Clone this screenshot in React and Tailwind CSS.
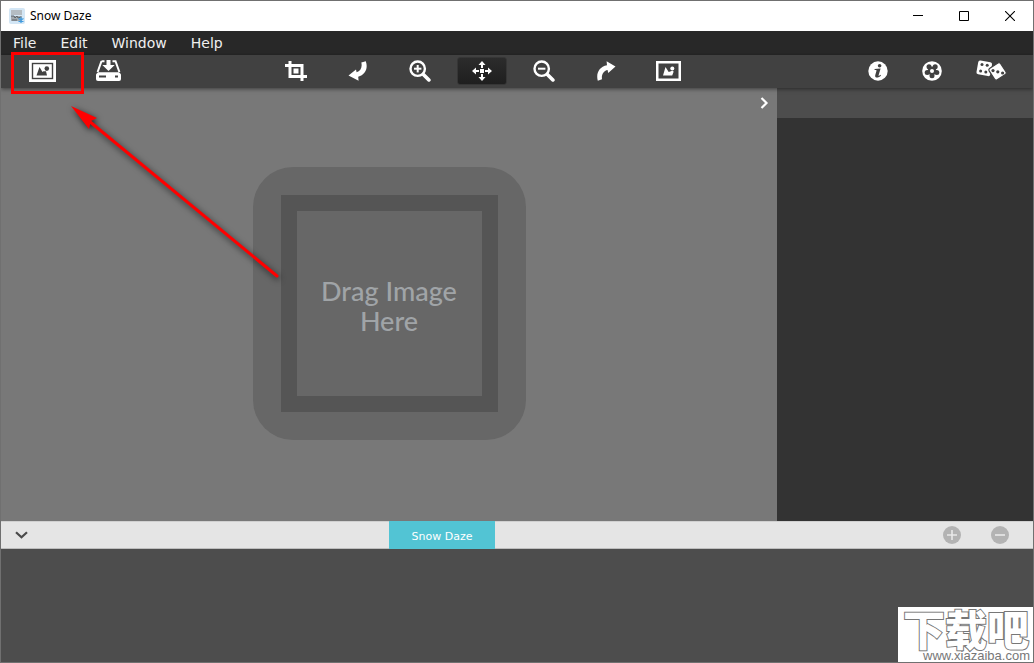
import { useState } from 'react';

const menus = ['File', 'Edit', 'Window', 'Help'];

const AppIcon = () => (
  <svg width="16" height="16" viewBox="0 0 16 16" aria-hidden="true">
    <rect x="0" y="0" width="16" height="16" rx="2" fill="#d3e6f5" />
    <rect x="2" y="2" width="11" height="5" fill="#b4bcc2" />
    <path d="M2 8h11v5H2z" fill="#a2a9ae" />
    <path d="M2 8h3l1 2 2-2 1 2 3-1M3 12h5" stroke="#5c6368" strokeWidth="1" fill="none" />
    <path d="M12 9v6M9.500 10.500l5 3M14.500 10.500l-5 3" stroke="#3f9be0" strokeWidth="1.2" />
  </svg>
);

const OpenIcon = () => (
  <svg width="27" height="22" viewBox="0 0 27 22" aria-hidden="true">
    <rect width="27" height="22" fill="#fff" />
    <rect x="3.5" y="3.5" width="20" height="15" fill="#fff" stroke="#414141" strokeWidth="1.4" />
    <path d="M7.5 15.5L10.5 7l3 5 1-.8 2.500 0 1 4.300z" fill="#414141" />
    <circle cx="17.8" cy="8.6" r="2.3" fill="#414141" />
  </svg>
);

const SaveIcon = () => (
  <svg width="25" height="21" viewBox="0 0 25 21" aria-hidden="true">
    <path d="M5.5 1.2H8.500M16.500 1.2h3L23.4 12M5.5 1.2L1.6 12" stroke="#fff" strokeWidth="2" fill="none" />
    <path d="M10.5 0h4v5h4.2l-6.2 6-6.2-6h4.2z" fill="#fff" />
    <path d="M2 12.200h21l2 2V19a2 2 0 0 1-2 2H2a2 2 0 0 1-2-2v-4.800z" fill="#fff" />
    <path d="M3 15.500h7v2H3zM19 15.500h3v2h-3z" fill="#414141" />
  </svg>
);

const CropIcon = () => (
  <svg width="22" height="20" viewBox="0 0 22 20" aria-hidden="true">
    <path d="M0 4.5h17V20M5 0v15.5h17" stroke="#fff" strokeWidth="3" fill="none" />
    <rect x="8.5" y="7.5" width="5" height="5" fill="#fff" />
  </svg>
);

const RotateLeftIcon = () => (
  <svg width="20" height="20" viewBox="0 0 20 20" aria-hidden="true">
    <path d="M13.300 1.600L17.800 0.3C20.4 7.5 17 14.2 10.2 15.7L10.6 19.8 0.5 14.6 8 8.600 8.6 11.200C12.6 10 14.5 6.2 13.300 1.600z" fill="#fff" />
  </svg>
);

const RotateRightIcon = () => (
  <svg width="20" height="20" viewBox="0 0 20 20" aria-hidden="true">
    <path d="M6 18.3L1.8 19.8C-.2 12.6 3 5.7 11 4.3L10.6.3 19.5 5.5 12.2 12 11.6 9C7.4 9.8 5.3 13.8 6 18.3z" fill="#fff" />
  </svg>
);

const ZoomIcon = ({ plus }) => (
  <svg width="22" height="22" viewBox="0 0 22 22" aria-hidden="true">
    <circle cx="8.7" cy="8.7" r="7.2" stroke="#fff" strokeWidth="2.4" fill="none" />
    <path d="M5 8.7h7.4" stroke="#fff" strokeWidth="2" />
    {plus && <path d="M8.7 5v7.4" stroke="#fff" strokeWidth="2" />}
    <path d="M14.4 14.4l5.5 5.5" stroke="#fff" strokeWidth="3.6" strokeLinecap="round" />
  </svg>
);

const MoveIcon = () => (
  <svg width="20" height="20" viewBox="0 0 20 20" fill="#fff" aria-hidden="true">
    <rect x="8" y="8" width="4" height="4" />
    <path d="M10 0l3.5 4H11v3H9V4H6.5zM10 20l3.5-4H11v-3H9v3H6.500zM0 10l4-3.5V9h3v2H4v2.5zM20 10l-4-3.5V9h-3v2h3v2.5z" />
  </svg>
);

const FitIcon = () => (
  <svg width="25" height="20" viewBox="0 0 25 20" aria-hidden="true">
    <rect x="1.25" y="1.25" width="22.5" height="17.5" fill="none" stroke="#fff" strokeWidth="2.5" />
    <path d="M7 14.5L9.5 6l3.2 5 1.5-.4 2-.8 1.500.700-1.500 4z" fill="#fff" />
    <circle cx="16.3" cy="7.6" r="2" fill="#fff" />
  </svg>
);

const InfoIcon = () => (
  <svg width="20" height="20" viewBox="0 0 20 20" aria-hidden="true">
    <circle cx="10" cy="10" r="9.7" fill="#fff" />
    <circle cx="11.6" cy="4.8" r="1.8" fill="#414141" />
    <path d="M6.600 8l6-.6-2 6.900c-.2.9.4.9 1.9-.5l.5.6c-2.3 2.8-6.500 3-5.8-.1l1.3-4.5c.2-.7-.2-.9-1.900-.8z" fill="#414141" />
  </svg>
);

const PresetIcon = () => (
  <svg width="20" height="20" viewBox="0 0 20 20" aria-hidden="true">
    <circle cx="10" cy="10" r="9.8" fill="#fff" />
    <g fill="#414141">
      <circle cx="7" cy="5.8" r="2.5" />
      <circle cx="13.2" cy="5.8" r="2.5" />
      <circle cx="14.8" cy="11.4" r="2.5" />
      <circle cx="10" cy="14.8" r="2.5" />
      <circle cx="5.200" cy="11.4" r="2.5" />
      <circle cx="10" cy="10" r="4.4" />
    </g>
    <circle cx="10" cy="10" r="2" fill="#fff" />
  </svg>
);

const DiceIcon = () => (
  <svg width="31" height="21" viewBox="0 0 31 21" aria-hidden="true">
    <rect x="1.3" y="1.3" width="14" height="14" rx="2" fill="#fff" transform="rotate(10 8 8)" />
    <g fill="#414141">
      <circle cx="6" cy="4.4" r="1.5" />
      <circle cx="11.2" cy="5.3" r="1.5" />
      <circle cx="4.6" cy="11" r="1.5" />
      <circle cx="9.8" cy="12" r="1.5" />
    </g>
    <rect x="14.8" y="4.6" width="13.6" height="13.6" rx="2" fill="#fff" stroke="#414141" strokeWidth="1.2" transform="rotate(57 21.6 11.4)" />
    <g fill="#414141">
      <circle cx="17" cy="10.6" r="1.6" />
      <circle cx="21.8" cy="11.8" r="1.6" />
      <circle cx="26.6" cy="13" r="1.6" />
    </g>
  </svg>
);

const viewTools = [
  { id: 'crop', label: 'Crop', icon: <CropIcon /> },
  { id: 'left', label: 'Rotate left', icon: <RotateLeftIcon /> },
  { id: 'zoomIn', label: 'Zoom in', icon: <ZoomIcon plus /> },
  { id: 'move', label: 'Move', icon: <MoveIcon /> },
  { id: 'zoomOut', label: 'Zoom out', icon: <ZoomIcon /> },
  { id: 'right', label: 'Rotate right', icon: <RotateRightIcon /> },
  { id: 'fit', label: 'Fit image', icon: <FitIcon /> },
];

const TitleBar = () => (
  <header className="flex h-[30px] shrink-0 items-center bg-white text-black">
    <div className="flex flex-1 items-center gap-[5px] pl-2">
      <AppIcon />
      <h1 className="font-['Noto_Sans',sans-serif] text-[12px] leading-4">Snow Daze</h1>
    </div>
    <button aria-label="Minimize" className="flex h-full w-[46px] items-center justify-center">
      <svg width="10" height="10" viewBox="0 0 10 10">
        <path d="M0 4.5h10" stroke="#000" />
      </svg>
    </button>
    <button aria-label="Maximize" className="flex h-full w-[46px] items-center justify-center">
      <svg width="10" height="10" viewBox="0 0 10 10">
        <path d="M.5.5h9v9h-9z" fill="none" stroke="#000" />
      </svg>
    </button>
    <button aria-label="Close" className="flex h-full w-[46px] items-center justify-center">
      <svg width="10" height="10" viewBox="0 0 10 10">
        <path d="M0 0l10 10M10 0L0 10" stroke="#000" strokeWidth="1.1" />
      </svg>
    </button>
  </header>
);

const MenuBar = () => (
  <nav className="flex h-6 shrink-0 items-center gap-6 bg-[#282828] pl-3 text-[14px] leading-5 text-[#f0f0f0]">
    {menus.map((name) => (
      <button key={name}>{name}</button>
    ))}
  </nav>
);

const Toolbar = ({ tool, onTool }) => (
  <div className="z-10 flex h-[33px] shrink-0 items-center justify-between bg-[#414141] px-2 pb-0.5 shadow-[0_1px_4px_rgba(0,0,0,0.5)]">
    <div className="flex">
      <button aria-label="Open image" className="flex w-[66px] justify-center"><OpenIcon /></button>
      <button aria-label="Save image" className="flex w-[66px] justify-center"><SaveIcon /></button>
    </div>
    <div className="flex gap-3">
      {viewTools.map((t) => (
        <button
          key={t.id}
          aria-label={t.label}
          aria-pressed={tool === t.id}
          onClick={() => onTool(t.id)}
          className={`flex h-7 w-[50px] items-center justify-center rounded-[3px] ${
            tool === t.id
              ? 'border border-[#363636] bg-linear-to-b from-[#2c2c2c] to-[#1f1f1f]'
              : ''
          }`}
        >
          {t.icon}
        </button>
      ))}
    </div>
    <div className="flex items-center pl-7">
      <button aria-label="Info" className="flex w-[54px] justify-center"><InfoIcon /></button>
      <button aria-label="Presets" className="flex w-[54px] justify-center"><PresetIcon /></button>
      <button aria-label="Random" className="flex w-16 justify-center"><DiceIcon /></button>
      <span className="w-0.5" />
    </div>
  </div>
);

const Canvas = () => (
  <main className="relative flex flex-1 items-center justify-center bg-[#787878] pb-[3px]">
    <div className="rounded-[40px] bg-[#676767] p-7">
      <div className="flex size-[217px] items-center justify-center border-16 border-[#555] pt-1.5">
        <p className="text-center font-[Lato,sans-serif] text-[27px] leading-[30px] font-medium text-[#a0a4a7]">
          Drag Image
          <br />
          Here
        </p>
      </div>
    </div>
    <button aria-label="Hide panel" className="absolute top-[9px] right-2">
      <svg width="9" height="12" viewBox="0 0 9 12">
        <path d="M1.5 1l5 5-5 5" fill="none" stroke="#fff" strokeWidth="2.2" />
      </svg>
    </button>
  </main>
);

const PresetBar = () => (
  <div className="flex h-7 shrink-0 items-stretch justify-between border-y border-t-[#d0d0d0] border-b-[#bdbdbd] bg-[#e5e5e5]">
    <button aria-label="Collapse presets" className="flex w-10 items-center justify-center">
      <svg width="13" height="8" viewBox="0 0 13 8">
        <path d="M1 1.2l5.5 5 5.5-5" fill="none" stroke="#4a4a4a" strokeWidth="2.2" />
      </svg>
    </button>
    <button className="-my-px bg-[#52c4d4] px-[23px] pt-1 text-[11px] text-white">Snow Daze</button>
    <div className="flex pr-[9px] pl-[85px]">
      <button aria-label="Add preset" className="flex w-12 items-center justify-center">
        <svg width="18" height="18" viewBox="0 0 18 18">
          <circle cx="9" cy="9" r="9" fill="#b3b3b3" />
          <path d="M4 9h10M9 4v10" stroke="#e9e9e9" strokeWidth="1.6" />
        </svg>
      </button>
      <button aria-label="Remove preset" className="flex w-12 items-center justify-center">
        <svg width="18" height="18" viewBox="0 0 18 18">
          <circle cx="9" cy="9" r="9" fill="#b3b3b3" />
          <path d="M4 9h10" stroke="#e9e9e9" strokeWidth="1.6" />
        </svg>
      </button>
    </div>
  </div>
);

// red marker around the open button, with an arrow pointing at it
const Callout = () => (
  <div className="pointer-events-none absolute inset-0 z-20">
    <div className="absolute top-[51px] left-[10px] h-[42px] w-[73px] border-3 border-[#f00]" />
    <svg className="absolute top-[95px] left-[60px]" width="240" height="200" viewBox="0 0 240 200">
      <g className="drop-shadow-[1px_2px_3px_rgba(0,0,0,0.7)]">
        <path d="M28 25L216 180" stroke="#f00" strokeWidth="3" strokeLinecap="round" />
        <path d="M10 10L36 22 30 25 28 33z" fill="#f00" />
      </g>
    </svg>
  </div>
);

const Watermark = () => (
  <div className="pointer-events-none absolute -right-px -bottom-px z-20 flex h-14 w-[136px] flex-col items-center bg-white">
    <p className="font-['Noto_Sans_CJK_SC',sans-serif] text-[42px] leading-[42px] font-black whitespace-nowrap text-white [paint-order:stroke] [-webkit-text-stroke:2px_#777]">下载吧</p>
    <p className="self-end pr-1 font-['Liberation_Sans',sans-serif] text-[13px] leading-[14px] text-[#777]">www.xiazaiba.com</p>
  </div>
);

const App = () => {
  const [tool, setTool] = useState('move');

  return (
    <div className="relative flex h-screen flex-col overflow-hidden border border-[#707070] bg-[#4d4d4d] font-['DejaVu_Sans',Verdana,sans-serif]">
      <TitleBar />
      <MenuBar />
      <Toolbar tool={tool} onTool={setTool} />
      <div className="flex min-h-0 flex-1">
        <Canvas />
        <aside className="w-64 bg-[#333]">
          <div className="h-[30px] bg-[#4d4d4d]" />
        </aside>
      </div>
      <PresetBar />
      <footer className="h-[113px] shrink-0 bg-[#4d4d4d]" />
      <Callout />
      <Watermark />
    </div>
  );
};

export default App;
